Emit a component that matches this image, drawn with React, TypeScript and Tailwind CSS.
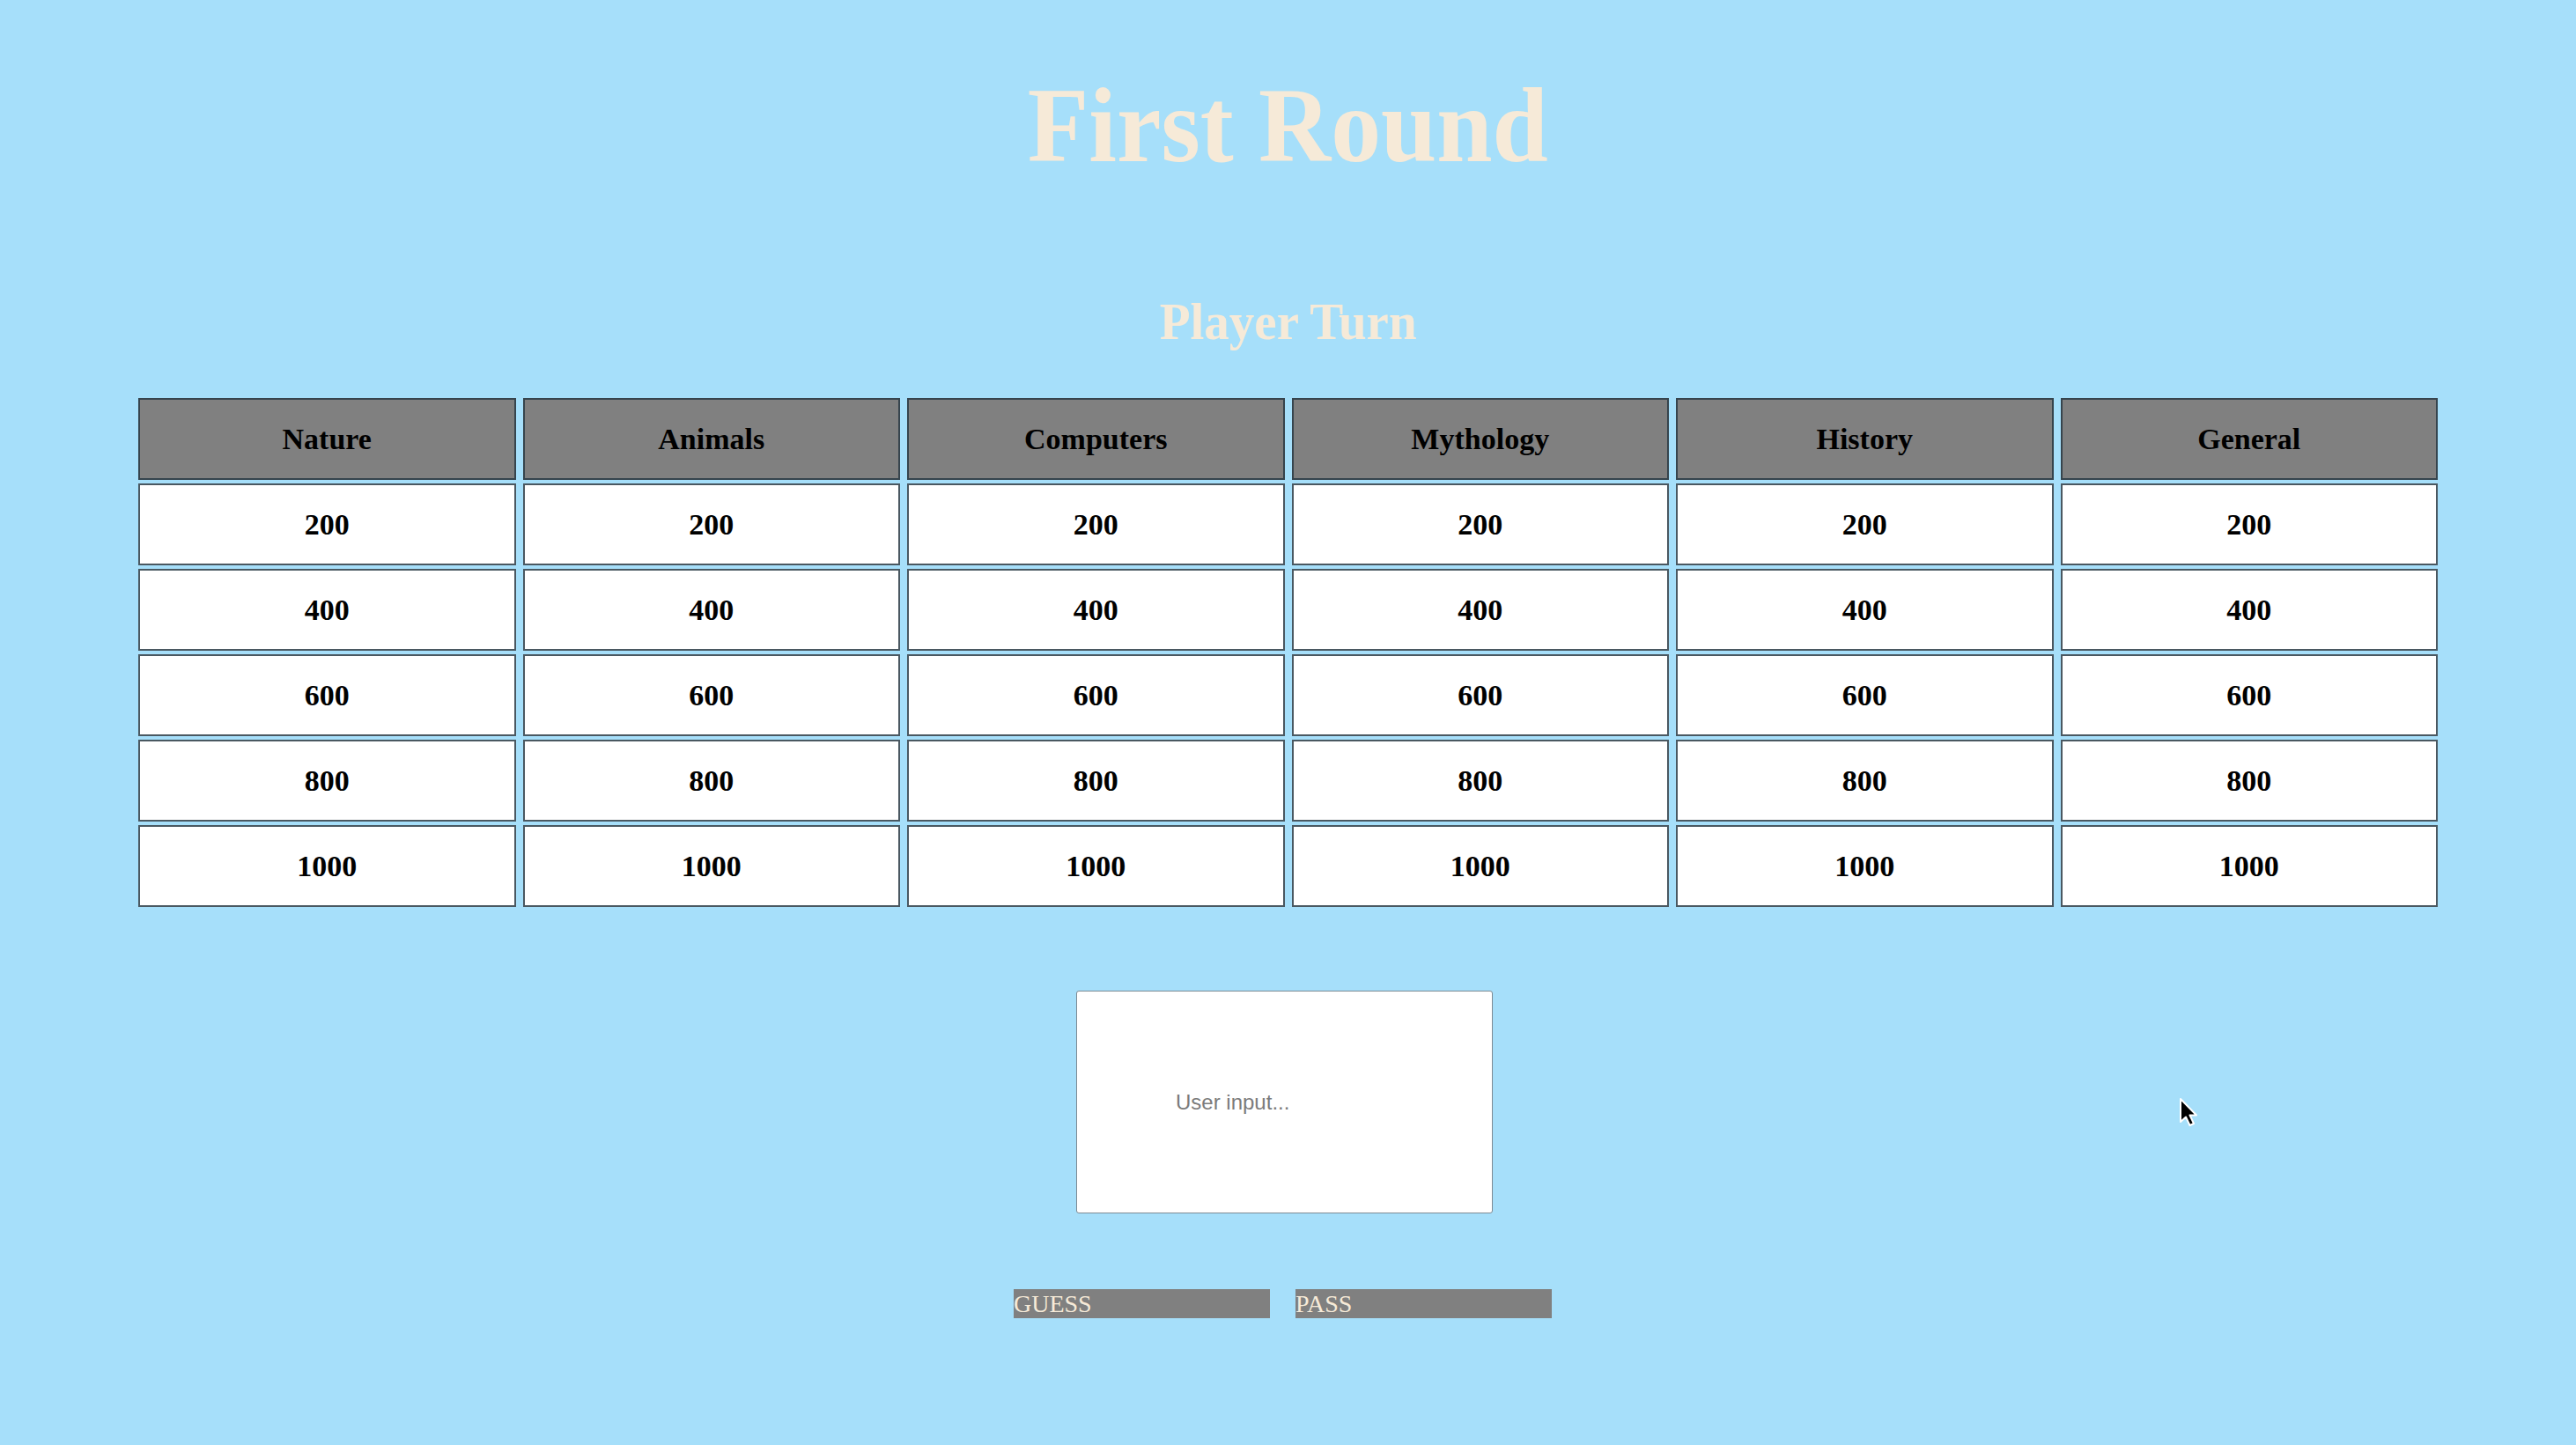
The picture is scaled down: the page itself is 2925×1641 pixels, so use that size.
import React from "react";

const categories = ["Nature", "Animals", "Computers", "Mythology", "History", "General"];
const values = [200, 400, 600, 800, 1000];

const serif = { fontFamily: '"Liberation Serif", "Times New Roman", serif' };
const sans = { fontFamily: '"Liberation Sans", Arial, sans-serif' };

const Cursor = () => (
   <svg
      className="absolute left-[2474px] top-[1246px]"
      width="24"
      height="36"
      viewBox="0 0 24 36"
   >
      <path
         d="M2 2 L2 28 L8 22.5 L12.5 32 L17 30 L12.5 20.5 L20 20.5 Z"
         fill="#000"
         stroke="#fff"
         strokeWidth="2"
         strokeLinejoin="round"
      />
   </svg>
);

export default function App() {
   return (
      <div className="relative w-full h-screen overflow-hidden bg-[#a6dffa] flex flex-col items-center" style={serif}>
         <h1 className="mt-[82px] text-[121px] leading-none font-bold text-[#f6ead8] scale-x-[0.94]">
            First Round
         </h1>
         <h2 className="mt-[132px] text-[60px] leading-none font-bold text-[#f6ead8] scale-x-[0.95]">
            Player Turn
         </h2>

         <section className="mt-[57px] w-[2611px] grid grid-cols-6 gap-x-[8px] gap-y-[4px]">
            {categories.map((c) => (
               <div
                  key={c}
                  className="h-[93px] border-2 border-[#36444d] bg-[#808080] flex items-center justify-center text-[34px] font-bold text-black"
               >
                  {c}
               </div>
            ))}
            {values.map((v) =>
               categories.map((c) => (
                  <div
                     key={c + v}
                     className="h-[93px] border-2 border-[#4a5861] bg-white flex items-center justify-center text-[34px] font-bold text-black"
                  >
                     {v}
                  </div>
               ))
            )}
         </section>

         <input
            type="text"
            placeholder="User input..."
            className="mt-[95px] mr-[8px] w-[473px] h-[253px] bg-white border border-[#7d8b94] rounded-[3px] pl-[112px] text-[24px] text-black placeholder:text-[#7b7b7b] outline-none"
            style={sans}
         />

         <div className="mt-[86px] mr-[12px] flex gap-[29px]">
            <button className="w-[291px] h-[33px] bg-[#808080] text-left text-[28px] leading-[33px] text-[#f6ead8]" style={serif}>
               GUESS
            </button>
            <button className="w-[291px] h-[33px] bg-[#808080] text-left text-[28px] leading-[33px] text-[#f6ead8]" style={serif}>
               PASS
            </button>
         </div>

         <Cursor />
      </div>
   );
}
